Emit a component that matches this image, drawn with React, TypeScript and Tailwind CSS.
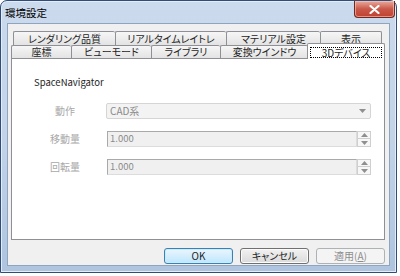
import type { ReactNode } from 'react';

const font = "font-['Noto_Sans_CJK_JP','Noto_Sans',sans-serif] [font-feature-settings:'palt']";

function Tab({ w, label, last }: { w: number; label: string; last?: boolean }) {
  return (
    <div
      style={{ width: w }}
      className={`h-full flex items-center justify-center border-t border-l ${last ? 'border-r' : ''} border-[#8e9096] rounded-t-[2px] bg-gradient-to-b from-[#f6f6f6] to-[#e3e3e3] text-[10px] leading-none text-[#1e1e1e]`}
    >
      {label}
    </div>
  );
}

function Tri({ down }: { down?: boolean }) {
  return (
    <svg width="7" height="4" viewBox="0 0 7 4" className="block">
      <path d={down ? 'M0 0H7L3.5 4Z' : 'M0 4H7L3.5 0Z'} fill="#8f8f8f" />
    </svg>
  );
}

function Row({ label, children }: { label: string; children: ReactNode }) {
  return (
    <div className="flex items-center h-[16px]">
      <div className="w-[62px] text-center text-[10px] leading-none text-[#a8a8a8]">{label}</div>
      <div className="ml-[10px] flex">{children}</div>
    </div>
  );
}

function Spin() {
  return (
    <div className="flex">
      <div className="w-[250px] h-[16px] ml-[1px] border border-[#a9a9a9] border-b-[#dcdcdc] border-r-[#dcdcdc] bg-[#f0f0f0] flex items-center pl-[2px] text-[9.5px] leading-none text-[#8a8a8a]">
        1.000
      </div>
      <div className="w-[14px] h-[16px] flex flex-col">
        <div className="h-[8px] border border-[#cfcfcf] bg-[#f7f7f7] flex items-center justify-center"><Tri /></div>
        <div className="h-[8px] border border-t-0 border-[#cfcfcf] bg-[#f7f7f7] flex items-center justify-center"><Tri down /></div>
      </div>
    </div>
  );
}

export default function App() {
  return (
    <div className={`w-[400px] h-[276px] bg-white ${font}`}>
      <div className="w-[397px] h-[273px] flex flex-col rounded-t-[7px] border border-[#2f4d78] bg-gradient-to-b from-[#cbdaec] via-[#c3d4e9] to-[#aec4df] shadow-[inset_0_0_0_1px_#e4edf7]">
        {/* title bar */}
        <div className="h-[22px] flex justify-between items-start">
          <span className="pl-[4px] pt-[5px] text-[10.5px] leading-[13px] text-black">環境設定</span>
          <div className="mr-[1px] w-[41px] h-[17px] rounded-b-[4px] border border-t-0 border-[#6d2a22] bg-gradient-to-b from-[#e9a99c] via-[#c9584a] to-[#c1402d] flex items-center justify-center shadow-[inset_0_0_0_1px_rgba(255,200,190,0.6)]">
            <svg width="11" height="9" viewBox="0 0 11 9">
              <path d="M1.5 1L9.5 8M9.5 1L1.5 8" stroke="#fff" strokeWidth="2.2" strokeLinecap="round" />
            </svg>
          </div>
        </div>

        {/* client area */}
        <div className="mx-[6px] flex-1 mb-[6px] border border-[#8fa4bf] bg-[#f0f0f0] flex flex-col pt-[7px] px-[3px]">
          {/* back tab row */}
          <div className="h-[14px] flex pl-[2px]">
            <Tab w={102} label="レンダリング品質" />
            <Tab w={111} label="リアルタイムレイトレ" />
            <Tab w={94} label="マテリアル設定" />
            <Tab w={62} label="表示" last />
          </div>
          {/* front tab row */}
          <div className="h-[13px] flex items-end">
            <Tab w={60} label="座標" />
            <Tab w={80} label="ビューモード" />
            <Tab w={69} label="ライブラリ" />
            <Tab w={88} label="変換ウインドウ" />
            <div className="relative z-10 -mb-px -ml-px w-[78px] h-[16px] border border-b-0 border-[#8e9096] rounded-t-[2px] bg-white flex items-center justify-center px-[2px] pt-[2px]">
              <div className="w-full h-[11px] border border-dotted border-black flex items-center justify-center text-[10px] leading-none text-[#1e1e1e]">
                3Dデバイス
              </div>
            </div>
          </div>

          {/* page */}
          <div className="w-[374px] h-[182px] border border-[#8e9096] bg-white pl-[22px] pt-[17px]">
            <div className="text-[9.5px] leading-[13px] text-[#1e1e1e]">SpaceNavigator</div>
            <div className="mt-[14px] flex flex-col gap-[12px]">
              <Row label="動作">
                <div className="w-[265px] h-[16px] rounded-[2px] border border-[#d5d5d5] bg-[#f3f3f3] flex items-center justify-between pl-[3px] pr-[4px] text-[10px] leading-none text-[#8a8a8a]">
                  <span>CAD系</span>
                  <Tri down />
                </div>
              </Row>
              <Row label="移動量">
                <Spin />
              </Row>
              <Row label="回転量">
                <Spin />
              </Row>
            </div>
          </div>

          {/* buttons */}
          <div className="mt-[8px] flex justify-end gap-[7px] pr-[1px]">
            <div className="w-[69px] h-[16px] rounded-[3px] border border-[#3c7fb1] bg-gradient-to-b from-[#eaf6fd] to-[#bee6fd] shadow-[inset_0_0_0_1px_#c8ecfd] flex items-center justify-center text-[10px] leading-none text-[#1e1e1e]">
              OK
            </div>
            <div className="w-[69px] h-[16px] rounded-[3px] border border-[#707070] bg-gradient-to-b from-[#f2f2f2] to-[#dadada] shadow-[inset_0_0_0_1px_#fbfbfb] flex items-center justify-center text-[10px] leading-none text-[#1e1e1e]">
              キャンセル
            </div>
            <div className="w-[69px] h-[16px] rounded-[3px] border border-[#adb2b5] bg-[#f4f4f4] flex items-center justify-center text-[10px] leading-none text-[#8d8d8d]">
              適用(<span className="underline">A</span>)
            </div>
          </div>
        </div>
      </div>
    </div>
  );
}
